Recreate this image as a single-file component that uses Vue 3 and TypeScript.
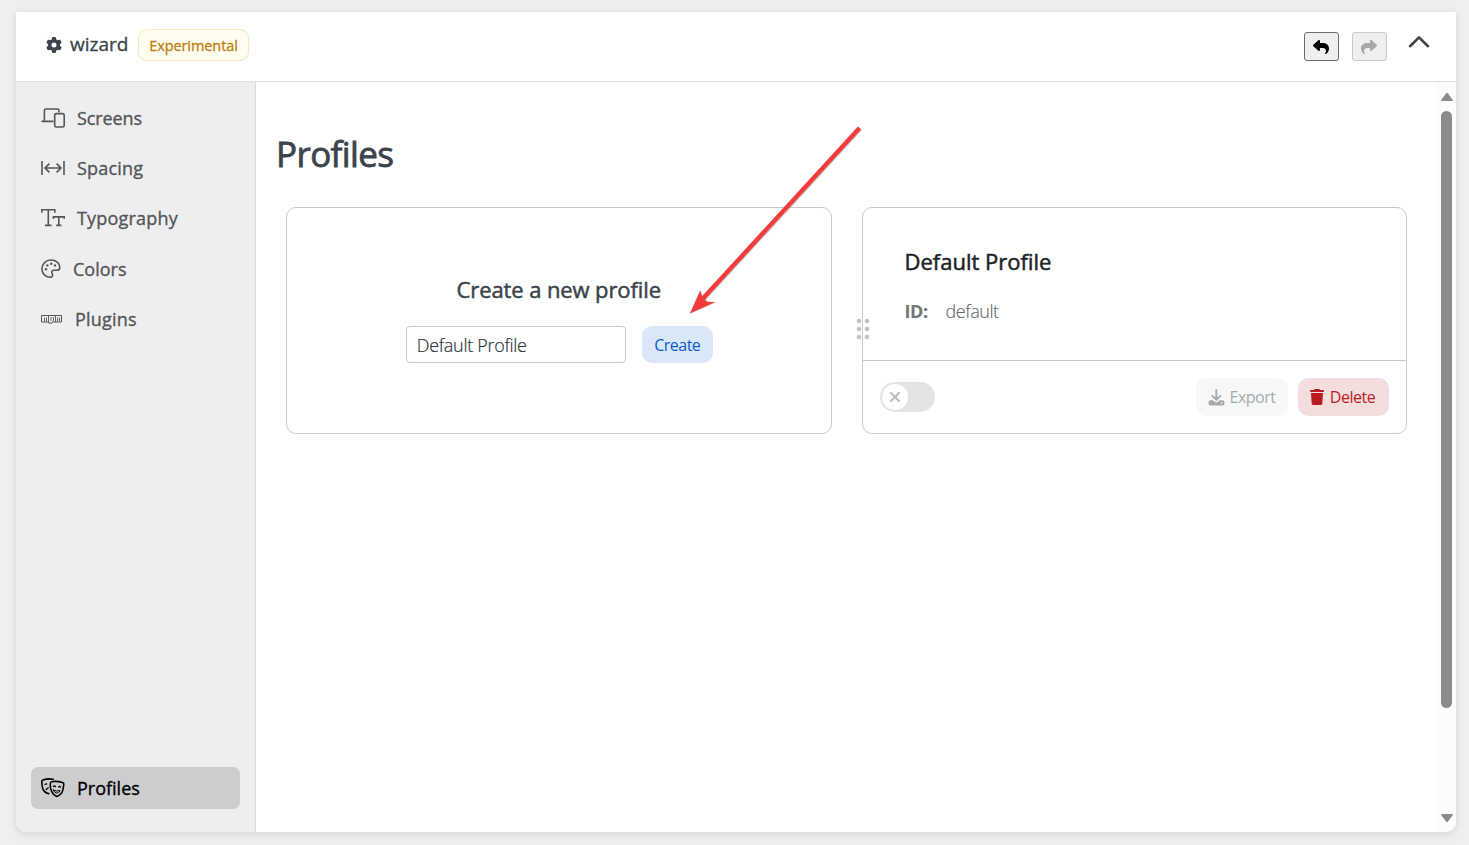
<script setup lang="ts">
import { ref } from 'vue'

interface NavItem {
  key: string
  label: string
}

const navItems: NavItem[] = [
  { key: 'screens', label: 'Screens' },
  { key: 'spacing', label: 'Spacing' },
  { key: 'typography', label: 'Typography' },
  { key: 'colors', label: 'Colors' },
  { key: 'plugins', label: 'Plugins' },
]

const replyPath =
  'M205 34.8c11.5 5.1 19 16.6 19 29.2v64H336c97.2 0 176 78.8 176 176c0 113.3-81.5 163.9-100.2 174.1c-2.5 1.4-5.3 1.9-8.1 1.9c-10.9 0-19.7-8.9-19.7-19.7c0-7.5 4.3-14.4 9.8-19.5c9.4-8.8 22.2-26.4 22.2-56.7c0-53-43-96-96-96H224v64c0 12.6-7.4 24.1-19 29.2s-25 3-34.4-5.4l-160-144C3.9 225.7 0 217.1 0 208s3.9-17.7 10.6-23.8l160-144c9.4-8.5 22.9-10.6 34.4-5.4z'

const profileName = ref('Default Profile')
</script>

<template>
  <div class="page">
    <div class="panel">
      <header class="header">
        <svg class="gear" viewBox="0 0 512 512"><path fill="currentColor" d="M495.9 166.6c3.2 8.7 .5 18.4-6.4 24.6l-43.3 39.4c1.1 8.3 1.7 16.8 1.7 25.4s-.6 17.1-1.7 25.4l43.3 39.4c6.9 6.2 9.6 15.9 6.4 24.6c-4.4 11.9-9.7 23.3-15.8 34.3l-4.7 8.1c-6.6 11-14 21.4-22.1 31.2c-5.9 7.2-15.7 9.6-24.5 6.8l-55.7-17.7c-13.4 10.3-28.2 18.9-44 25.4l-12.5 57.1c-2 9.1-9 16.3-18.2 17.8c-13.8 2.3-28 3.5-42.5 3.5s-28.7-1.2-42.5-3.5c-9.2-1.5-16.2-8.7-18.2-17.8l-12.5-57.1c-15.8-6.5-30.6-15.1-44-25.4L83.1 425.9c-8.8 2.8-18.6 .3-24.5-6.8c-8.1-9.8-15.5-20.2-22.1-31.2l-4.7-8.1c-6.1-11-11.4-22.4-15.8-34.3c-3.2-8.7-.5-18.4 6.4-24.6l43.3-39.4C64.6 273.1 64 264.6 64 256s.6-17.1 1.7-25.4L22.4 191.2c-6.9-6.2-9.6-15.9-6.4-24.6c4.4-11.9 9.7-23.3 15.8-34.3l4.7-8.1c6.6-11 14-21.4 22.1-31.2c5.9-7.2 15.7-9.6 24.5-6.8l55.7 17.7c13.4-10.3 28.2-18.9 44-25.4l12.5-57.1c2-9.1 9-16.3 18.2-17.8C227.3 1.2 241.5 0 256 0s28.7 1.2 42.5 3.5c9.2 1.5 16.2 8.7 18.2 17.8l12.5 57.1c15.8 6.5 30.6 15.1 44 25.4l55.7-17.7c8.8-2.8 18.6-.3 24.5 6.8c8.1 9.8 15.5 20.2 22.1 31.2l4.7 8.1c6.1 11 11.4 22.4 15.8 34.3zM256 336a80 80 0 1 0 0-160 80 80 0 1 0 0 160z" /></svg>
        <span class="brand">wizard</span>
        <span class="badge">Experimental</span>
        <div class="actions">
          <button class="history" type="button" aria-label="Undo">
            <svg viewBox="0 0 512 512"><path fill="currentColor" :d="replyPath" /></svg>
          </button>
          <button class="history redo" type="button" aria-label="Redo" disabled>
            <svg viewBox="0 0 512 512"><path fill="currentColor" :d="replyPath" /></svg>
          </button>
          <svg class="collapse" viewBox="0 0 22 14"><path d="M2 11.2 11 2.4l9 8.8" fill="none" stroke="currentColor" stroke-width="2.6" stroke-linecap="round" stroke-linejoin="round" /></svg>
        </div>
      </header>

      <div class="body">
        <nav class="sidebar">
          <a v-for="item in navItems" :key="item.key" class="nav" :class="item.key">
            <svg v-if="item.key === 'screens'" class="icon" viewBox="0 0 24 20" fill="none" stroke="currentColor" stroke-width="1.6">
              <path d="M3.4 13.4V2.6Q3.4 1 5 1h11.4Q18 1 18 2.6v1.6M.6 13.4h11.9M.8 13.2v.6M15.300 5.6h6.300q1.6 0 1.6 1.6v10.200q0 1.6-1.6 1.6h-6.300q-1.6 0-1.6-1.6V7.200q0-1.6 1.6-1.6Z" />
            </svg>
            <svg v-else-if="item.key === 'spacing'" class="icon" viewBox="0 0 24 20" fill="none" stroke="currentColor" stroke-width="1.6">
              <path d="M1 3v14M23 3v14M4.2 10h15.6M8.4 5.6 4 10l4.4 4.4M15.6 5.6 20 10l-4.4 4.4" />
            </svg>
            <svg v-else-if="item.key === 'typography'" class="icon" viewBox="0 0 24 20" fill="none" stroke="currentColor" stroke-width="1.6">
              <path d="M.8 4.8V1.8h13v3M7.3 1.8v15.6M4 17.4h6.6M12.4 10.8V8.9h10.8v1.9M17.8 8.9v8.5M15.2 17.4h5.2" />
            </svg>
            <svg v-else-if="item.key === 'colors'" class="icon" viewBox="0 0 20 20">
              <path d="M10.2 18.2C5.2 18.7.9 14.9.9 10a9 9 0 0 1 9.1-9c5 0 8.8 3.3 8.8 7.4 0 1.8-1.2 2.8-3.3 2.8h-2.6c-1.8 0-2.7 1.4-1.9 2.9.9 1.8.7 3.8-.8 4.1Z" fill="none" stroke="currentColor" stroke-width="1.6" />
              <g fill="currentColor"><circle cx="5" cy="10.3" r="1.2" /><circle cx="6.4" cy="6.4" r="1.2" /><circle cx="10.2" cy="4.7" r="1.2" /><circle cx="14" cy="6.4" r="1.2" /></g>
            </svg>
            <svg v-else class="icon" viewBox="0 0 22 20" fill="none" stroke="currentColor" stroke-width="1">
              <path d="M.5 6.500h20v6.500H11v1H7.500v-1h-7Z" />
              <path d="M3.5 8.500v4M5.500 8.500v4M7.500 7v6M10 8v4M12.500 8v4M14.500 7v6M16.500 8.500v4M18.500 8.500v4" stroke-width=".9" />
            </svg>
            <span>{{ item.label }}</span>
          </a>
          <a class="nav profiles active">
            <svg class="icon" viewBox="0 0 24 20" fill="none" stroke="currentColor" stroke-width="1.6" stroke-linecap="round" stroke-linejoin="round">
              <path d="M9.4 5.100Q9.500 4 10.700 3.700q5-.9 10.800.8 1.500.5 1.300 1.900l-.8 5q-1 5.500-6.300 7.100-5.100-2.500-6-7.800Q9 7.500 9.400 5.100Z" />
              <path d="M12.200 1.400Q7 .2 2 2 .7 2.500.8 3.800q0 4.200 1.200 7.300 1.300 3.400 5.700 4.500" />
              <path d="M12.200 12.100q3.200 1.600 6.900.500-1.600 2.700-3.600 2.500-2-.2-3.300-3Z" stroke-width="1" />
              <path d="M12.400 8.500q.9-.9 2 0M17.600 8.900q1-.9 1.900.2M4 6.400l1.700-.5M5.300 11.600q.7-1.300 2-1.700" stroke-width="1.300" />
            </svg>
            <span>Profiles</span>
          </a>
        </nav>

        <main class="main">
          <h1>Profiles</h1>
          <div class="cards">
            <section class="card create">
              <h2>Create a new profile</h2>
              <div class="form">
                <input v-model="profileName" type="text" aria-label="Profile name" />
                <button class="btn primary" type="button"><span>Create</span></button>
              </div>
            </section>

            <section class="card profile">
              <svg class="grip" viewBox="0 0 14 22" fill="currentColor">
                <circle cx="3" cy="3" r="2.300" /><circle cx="11" cy="3" r="2.300" />
                <circle cx="3" cy="11" r="2.300" /><circle cx="11" cy="11" r="2.300" />
                <circle cx="3" cy="19" r="2.300" /><circle cx="11" cy="19" r="2.300" />
              </svg>
              <div class="info">
                <h2>Default Profile</h2>
                <p><b>ID:</b><span>default</span></p>
              </div>
              <footer class="foot">
                <div class="toggle">
                  <div class="knob">
                    <svg viewBox="0 0 12 12"><path d="m2 2 8 8M10 2 2 10" stroke="currentColor" stroke-width="2" stroke-linecap="round" /></svg>
                  </div>
                </div>
                <button class="btn export" type="button">
                  <svg viewBox="0 0 17 17">
                    <path d="M8.300 1v8.800M4.200 6.900l4.100 3.900 4.100-3.900" fill="none" stroke="currentColor" stroke-width="1.900" stroke-linecap="round" stroke-linejoin="round" />
                    <path d="M2.300 11.200h2.500l2.300 1.900q1.200.9 2.400 0l2.300-1.900h2.400q2.300 0 2.300 2v1.300q0 2-2 2h-12q-2 0-2-2v-1.300q0-2 1.800-2Zm11.400 3.500a.8.8 0 1 0 0-1.600.8.8 0 0 0 0 1.600Z" fill="currentColor" fill-rule="evenodd" />
                  </svg>
                  <span>Export</span>
                </button>
                <button class="btn delete" type="button">
                  <svg viewBox="0 0 448 512"><path fill="currentColor" d="M135.200 17.700L128 32H32C14.300 32 0 46.300 0 64S14.300 96 32 96H416c17.700 0 32-14.300 32-32s-14.300-32-32-32H320l-7.200-14.300C307.400 6.800 296.300 0 284.200 0H163.800c-12.100 0-23.200 6.800-28.600 17.700zM416 128H32L53.200 467c1.600 25.300 22.600 45 47.900 45H346.900c25.300 0 46.300-19.700 47.900-45L416 128z" /></svg>
                  <span>Delete</span>
                </button>
              </footer>
            </section>
          </div>
        </main>

        <div class="scrollbar">
          <svg viewBox="0 0 12 10"><path d="M5 1.400q1-1.300 2 0l4.700 6.300q.6 1.300-.9 1.300H1.200Q-.3 9 .3 7.700Z" fill="currentColor" /></svg>
          <div class="thumb"></div>
          <svg class="down" viewBox="0 0 12 10"><path d="M5 1.400q1-1.300 2 0l4.700 6.300q.6 1.300-.9 1.300H1.200Q-.3 9 .3 7.700Z" fill="currentColor" /></svg>
        </div>
      </div>

      <svg class="arrow" viewBox="0 0 180 196">
        <path d="m176 5.500-158 172" stroke="#888" stroke-opacity=".5" stroke-width="5" />
        <path d="m175.500 5-158 172" stroke="#f43b3b" stroke-width="4.300" />
        <path d="M6 190.500 16.200 167.500l2.600 7.300 4.500 4 7.700.5Z" fill="#f43b3b" stroke="#a66" stroke-opacity=".5" stroke-width=".5" />
      </svg>
    </div>
  </div>
</template>

<style>
body {
  background: #efefef;
  overflow: hidden;
}
</style>

<style scoped>
* {
  box-sizing: border-box;
}

.page {
  height: 845px;
  padding: 12px 13px 13px 16px;
  font-family: 'Open Sans', 'Noto Sans', sans-serif;
  color: #3c434a;
  white-space: nowrap;
}

.page svg {
  display: block;
  flex: none;
}

h1,
h2,
p {
  margin: 0;
  font-weight: 400;
}

.panel {
  position: relative;
  height: 820px;
  display: flex;
  flex-direction: column;
  background: #fff;
  border-radius: 0 0 10px 10px;
  box-shadow: 0 2px 8px rgba(0, 0, 0, 0.12);
}

.header {
  height: 70px;
  flex: none;
  display: flex;
  align-items: center;
  padding: 0 26px 0 30px;
  border-bottom: 1px solid #e2e2e5;
}

.gear {
  width: 16px;
  height: 16px;
  margin-top: -3px;
}

.brand {
  margin: -6px 0 0 8px;
  width: 68px;
  font-size: 19px;
  letter-spacing: 0;
  -webkit-text-stroke: 0.35px currentColor;
}

.badge {
  width: 111px;
  height: 32px;
  margin-top: -3px;
  border: 1px solid #f8e6c0;
  border-radius: 9px;
  background: #fffcf0;
  color: #bd7c0c;
  font-size: 14.5px;
  line-height: 31px;
  text-align: center;
  letter-spacing: -0.08px;
  -webkit-text-stroke: 0.3px currentColor;
}

.actions {
  margin-left: auto;
  display: flex;
  align-items: center;
}

.history {
  width: 35px;
  height: 29px;
  margin-right: 13px;
  padding: 0 1px 0 0;
  display: grid;
  place-items: center;
  border: 1px solid #6b6b6b;
  border-radius: 3px;
  background: #efefef;
  color: #000;
}

.history svg {
  width: 16px;
  height: 16px;
}

.redo {
  margin-right: 21px;
  border-color: #cacaca;
  color: #a9a9a9;
}

.redo svg {
  transform: scaleX(-1);
}

.collapse {
  width: 22px;
  height: 14px;
  margin: -10px 0 0;
}

.body {
  flex: 1;
  display: flex;
  min-height: 0;
}

.sidebar {
  width: 240px;
  padding: 15px 15px 23px;
  display: flex;
  flex-direction: column;
  gap: 8.2px;
  background: #eeeef0;
  border-right: 1px solid #dadadd;
  border-radius: 0 0 0 10px;
}

.nav {
  height: 42px;
  flex: none;
  padding: 0 10px;
  display: flex;
  align-items: center;
  gap: 12px;
  border-radius: 7px;
  color: #555558;
  font-size: 18px;
  letter-spacing: 0;
  -webkit-text-stroke: 0.35px currentColor;
}

.icon {
  width: 24px;
  height: 20px;
}

.screens {
  letter-spacing: -0.1px;
}

.spacing,
.typography,
.plugins {
  letter-spacing: 0.2px;
}

.colors .icon {
  width: 20px;
}

.plugins .icon {
  width: 22px;
}

.profiles {
  margin-top: auto;
}

.active {
  width: 209px;
  background: #cdcdcf;
  color: #000;
}

.main {
  flex: 1;
  min-width: 0;
  padding: 47px 30px 0;
}

h1 {
  height: 78px;
  margin-left: -10px;
  font-size: 35px;
  line-height: 50px;
  letter-spacing: -0.6px;
  -webkit-text-stroke: 0.8px currentColor;
}

.cards {
  display: grid;
  grid-template-columns: 1fr 1fr;
  gap: 30px;
}

.card {
  height: 227px;
  border: 1px solid #c9c9cb;
  border-radius: 10px;
}

h2 {
  font-size: 22px;
  line-height: 30px;
  letter-spacing: -0.1px;
  -webkit-text-stroke: 0.5px currentColor;
}

.create {
  display: flex;
  flex-direction: column;
  align-items: center;
  padding-top: 66px;
}

.form {
  display: flex;
  gap: 16px;
  margin: 22px 0 0 1px;
}

input {
  width: 220px;
  height: 37px;
  padding: 1px 10px 0;
  border: 1px solid #c8c8ca;
  border-radius: 4px;
  background: #fff;
  color: #2c3338;
  font-family: inherit;
  font-size: 18px;
  font-weight: 300;
  letter-spacing: -0.3px;
  outline: none;
  -webkit-text-stroke: 0.2px currentColor;
}

.btn {
  height: 37px;
  padding: 0;
  display: flex;
  align-items: center;
  justify-content: center;
  border: 0;
  border-radius: 10px;
  font-family: inherit;
  font-size: 16px;
  letter-spacing: -0.5px;
}

.primary {
  width: 71px;
  background: #d9e7f8;
  color: #0a5ccd;
}

.profile {
  position: relative;
}

.grip {
  position: absolute;
  left: -7px;
  top: 110px;
  width: 14px;
  height: 22px;
  color: #c3c3c5;
}

.info {
  height: 153px;
  padding: 38px 42px 0;
  border-bottom: 1px solid #c9c9cb;
}

.info h2 {
  color: #1d2327;
  letter-spacing: 0;
}

.info p {
  margin-top: 20px;
  display: flex;
  gap: 17px;
  font-size: 18px;
  font-weight: 300;
  line-height: 30px;
  letter-spacing: -0.45px;
  color: #646970;
  -webkit-text-stroke: 0.15px currentColor;
}

.info b {
  width: 24px;
  font-weight: 700;
  color: #77777a;
}

.foot {
  height: 72px;
  display: flex;
  align-items: center;
  padding: 0 17px;
}

.toggle {
  width: 55px;
  height: 30px;
  margin-right: auto;
  padding: 2px;
  border-radius: 15px;
  background: #e4e4e5;
}

.knob {
  width: 26px;
  height: 26px;
  display: grid;
  place-items: center;
  border-radius: 13px;
  background: #fff;
  color: #bdbdbf;
}

.knob svg {
  width: 12px;
  height: 12px;
}

.export {
  width: 92px;
  height: 38px;
  margin-right: 10px;
  padding-right: 1px;
  gap: 5px;
  background: #f6f8f8;
  color: #a7aaad;
}

.export svg {
  width: 17px;
  height: 17px;
}

.delete {
  width: 91px;
  height: 38px;
  padding-right: 2px;
  gap: 6px;
  background: #f3dddd;
  color: #b91c1c;
}

.delete svg {
  width: 14px;
  height: 16px;
}

.scrollbar {
  width: 19px;
  padding: 10px 3px 9px 4px;
  display: flex;
  flex-direction: column;
  background: #fcfcfc;
  border-radius: 0 0 10px 0;
  color: #8b8b8b;
}

.scrollbar svg {
  width: 12px;
  height: 10px;
  margin-left: -0.5px;
}

.thumb {
  width: 11px;
  height: 597px;
  margin-top: 9px;
  border-radius: 6px;
  background: #8b8b8b;
}

.scrollbar .down {
  margin-top: auto;
  transform: scaleY(-1);
}

.arrow {
  position: absolute;
  left: 667.5px;
  top: 111px;
  width: 180px;
  height: 196px;
}
</style>
